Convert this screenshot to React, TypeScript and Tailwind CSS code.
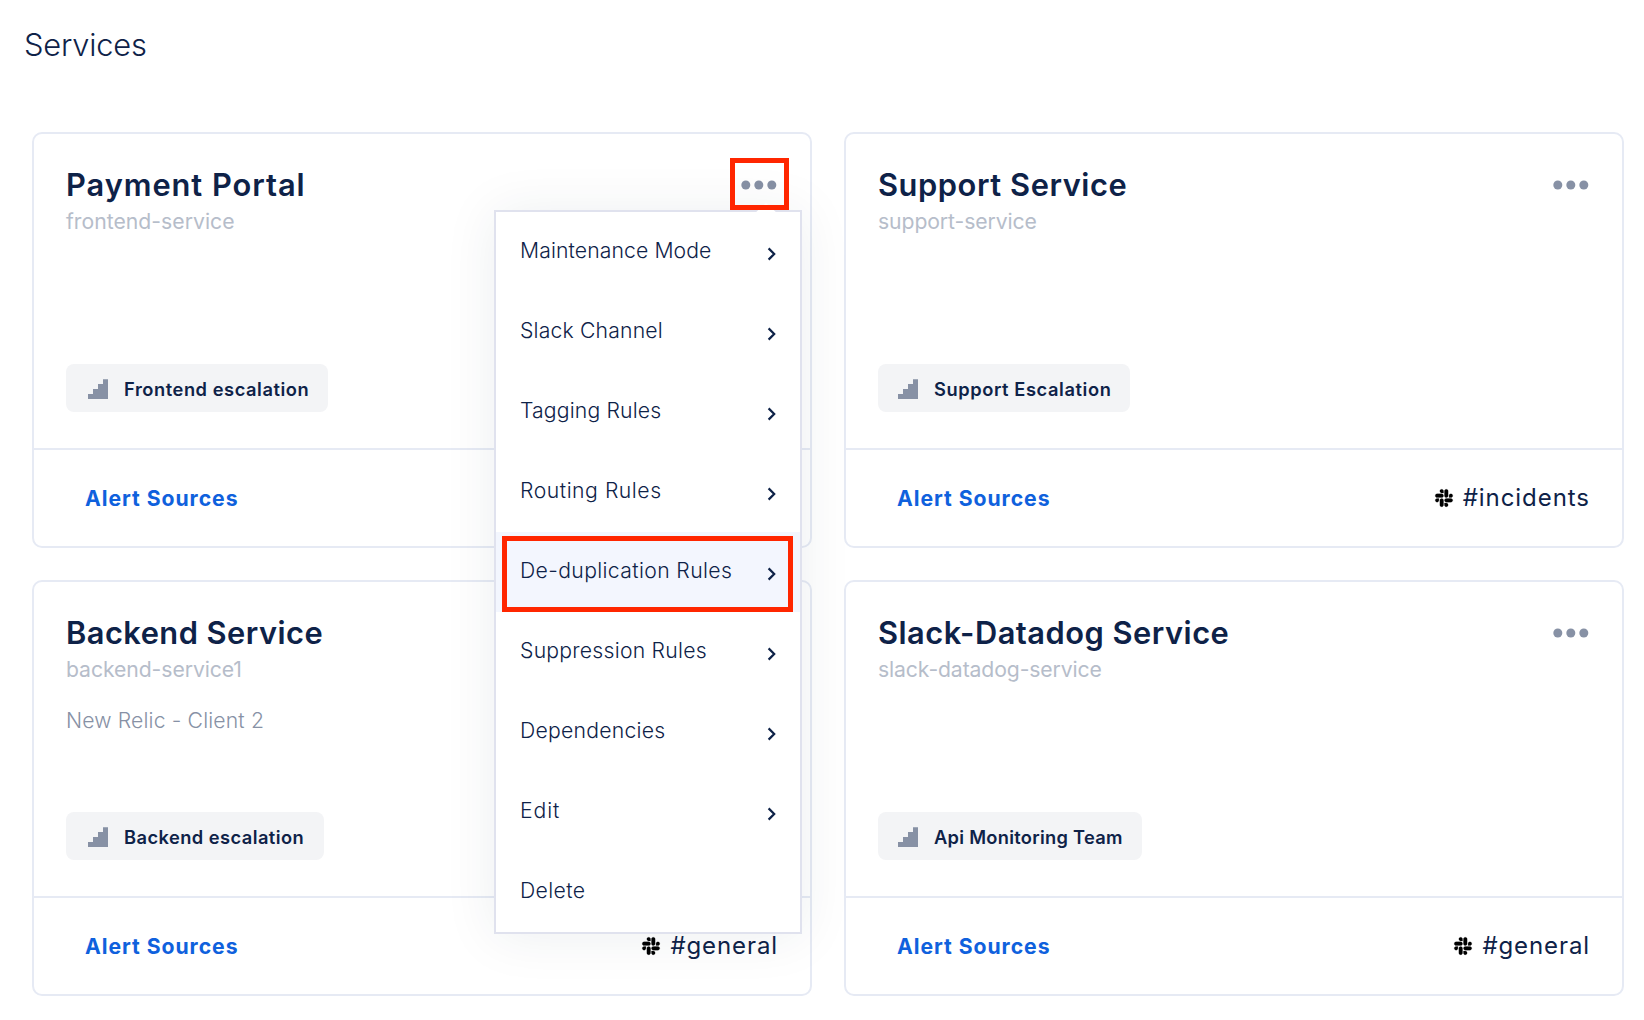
import React from 'react';
import { FaSlack } from 'react-icons/fa';

type Service = {
  name: string;
  nameTracking: string;
  slug: string;
  slugTracking: string;
  note?: string;
  policy: string;
  policyClass: string;
  channel?: string;
  channelTracking?: string;
};

const services: Service[] = [
  {
    name: 'Payment Portal',
    nameTracking: 'tracking-[0.95px]',
    slug: 'frontend-service',
    slugTracking: 'tracking-[0.01px]',
    policy: 'Frontend escalation',
    policyClass: 'w-[262px] pl-[22px] tracking-[0.55px]',
  },
  {
    name: 'Support Service',
    nameTracking: 'tracking-[0.57px]',
    slug: 'support-service',
    slugTracking: 'tracking-[-0.1px]',
    policy: 'Support Escalation',
    policyClass: 'w-[252px] pl-5 tracking-[0.58px]',
    channel: '#incidents',
    channelTracking: 'tracking-[0.95px]',
  },
  {
    name: 'Backend Service',
    nameTracking: 'tracking-[0.47px]',
    slug: 'backend-service1',
    slugTracking: 'tracking-[-0.08px]',
    note: 'New Relic - Client 2',
    policy: 'Backend escalation',
    policyClass: 'w-[258px] pl-[22px] tracking-[0.44px]',
    channel: '#general',
    channelTracking: 'tracking-[0.9px]',
  },
  {
    name: 'Slack-Datadog Service',
    nameTracking: 'tracking-[0.5px]',
    slug: 'slack-datadog-service',
    slugTracking: 'tracking-[-0.12px]',
    policy: 'Api Monitoring Team',
    policyClass: 'w-[264px] pl-5 tracking-[0.28px]',
    channel: '#general',
    channelTracking: 'tracking-[0.9px]',
  },
];

const menuItems = [
  { label: 'Maintenance Mode', tracking: 'tracking-[0.1px]' },
  { label: 'Slack Channel', tracking: 'tracking-[0.17px]' },
  { label: 'Tagging Rules', tracking: 'tracking-[0.15px]' },
  { label: 'Routing Rules', tracking: 'tracking-[0.53px]' },
  { label: 'De-duplication Rules', tracking: 'tracking-[0.36px]', active: true },
  { label: 'Suppression Rules', tracking: 'tracking-[0.24px]' },
  { label: 'Dependencies', tracking: 'tracking-[0.24px]' },
  { label: 'Edit', tracking: 'tracking-[0.9px]' },
  { label: 'Delete', tracking: 'tracking-[0.35px]', leaf: true },
];

function StairsIcon() {
  return (
    <svg width="20" height="20" viewBox="0 0 20 20" fill="#8791a5" className="mt-0.5 shrink-0">
      <path d="M15 0.3h5V20H0v-5h5v-5h5V5h5z" />
    </svg>
  );
}

function DotsIcon() {
  return (
    <svg width="36" height="10" viewBox="0 0 36 10" fill="#8791a5">
      <circle cx="4.8" cy="5" r="4.5" />
      <circle cx="17.8" cy="5" r="4.5" />
      <circle cx="30.8" cy="5" r="4.5" />
    </svg>
  );
}

function ServiceCard({ service }: { service: Service }) {
  return (
    <section className="flex h-[416px] flex-col rounded-[10px] border-2 border-[#e6eaf4] bg-white">
      <div className="flex flex-1 flex-col items-start border-b-2 border-[#e6eaf4] pt-[31px] pr-[33px] pb-9 pl-8">
        <div className="flex w-full items-center justify-between">
          <h2 className={`text-[30.8px] leading-10 font-semibold ${service.nameTracking}`}>{service.name}</h2>
          <button aria-label="Service options">
            <DotsIcon />
          </button>
        </div>
        <p className={`mt-0.5 text-[21.2px] leading-7 text-[#b6bdca] ${service.slugTracking}`}>{service.slug}</p>
        {service.note && (
          <p className="mt-[23px] text-[21.2px] leading-7 font-light tracking-[0.14px] text-[#8791a5]">
            {service.note}
          </p>
        )}
        <div
          className={`mt-auto flex h-12 items-center rounded-lg bg-[#f3f4f6] text-[18.3px] font-semibold whitespace-nowrap ${service.policyClass}`}
        >
          <StairsIcon />
          <span className="mt-1 ml-4">{service.policy}</span>
        </div>
      </div>
      <div className="flex h-24 items-center justify-between pr-8 pl-[51px]">
        <a className="mt-0.5 text-[21.2px] font-bold tracking-[0.95px] text-[#0f61dd]">Alert Sources</a>
        {service.channel && (
          <span className="flex items-center gap-[9px]">
            <FaSlack className="size-[20px] stroke-black stroke-[5px] text-black" />
            <span className={`text-[24px] leading-8 ${service.channelTracking}`}>{service.channel}</span>
          </span>
        )}
      </div>
    </section>
  );
}

function ServiceMenu() {
  return (
    <div className="absolute top-[210px] left-[494px] w-[308px] border-2 border-[#e0e2ee] bg-white shadow-[0_2px_50px_rgba(20,50,70,0.08)]">
      <svg width="24" height="12" viewBox="0 0 24 12" className="absolute -top-2.5 left-[258px]">
        <path d="M0 12 12 1l12 11z" fill="#fff" />
      </svg>
      {menuItems.map((item) => (
        <div
          key={item.label}
          className={`flex h-20 justify-between pt-[23px] pr-[23px] pl-6 ${item.active ? 'bg-[#f3f6fe]' : ''}`}
        >
          <span className={`text-[21.2px] leading-[30px] font-light ${item.tracking}`}>{item.label}</span>
          {!item.leaf && (
            <svg width="10" height="14" viewBox="0 0 10 14" fill="none" stroke="#0e2248" strokeWidth="2.2" className="mt-3">
              <path d="M1.6 1.4 7.2 7 1.6 12.6" />
            </svg>
          )}
        </div>
      ))}
    </div>
  );
}

export default function App() {
  return (
    <main className="relative h-[1020px] w-[1644px] overflow-hidden bg-white px-8 pt-[25px] font-['Inter',sans-serif] text-[#0e2248]">
      <h1 className="-ml-2 h-[107px] text-[30.8px] leading-10 font-light tracking-[-0.18px]">Services</h1>
      <div className="grid w-[1592px] grid-cols-2 gap-8">
        {services.map((service) => (
          <ServiceCard key={service.name} service={service} />
        ))}
      </div>
      <ServiceMenu />
      <div className="absolute top-[158px] left-[730px] h-[52px] w-[59px] border-[5px] border-[#ff2600]" />
      <div className="absolute top-[536px] left-[502px] h-[76px] w-[291px] border-[5px] border-[#ff2600]" />
    </main>
  );
}
